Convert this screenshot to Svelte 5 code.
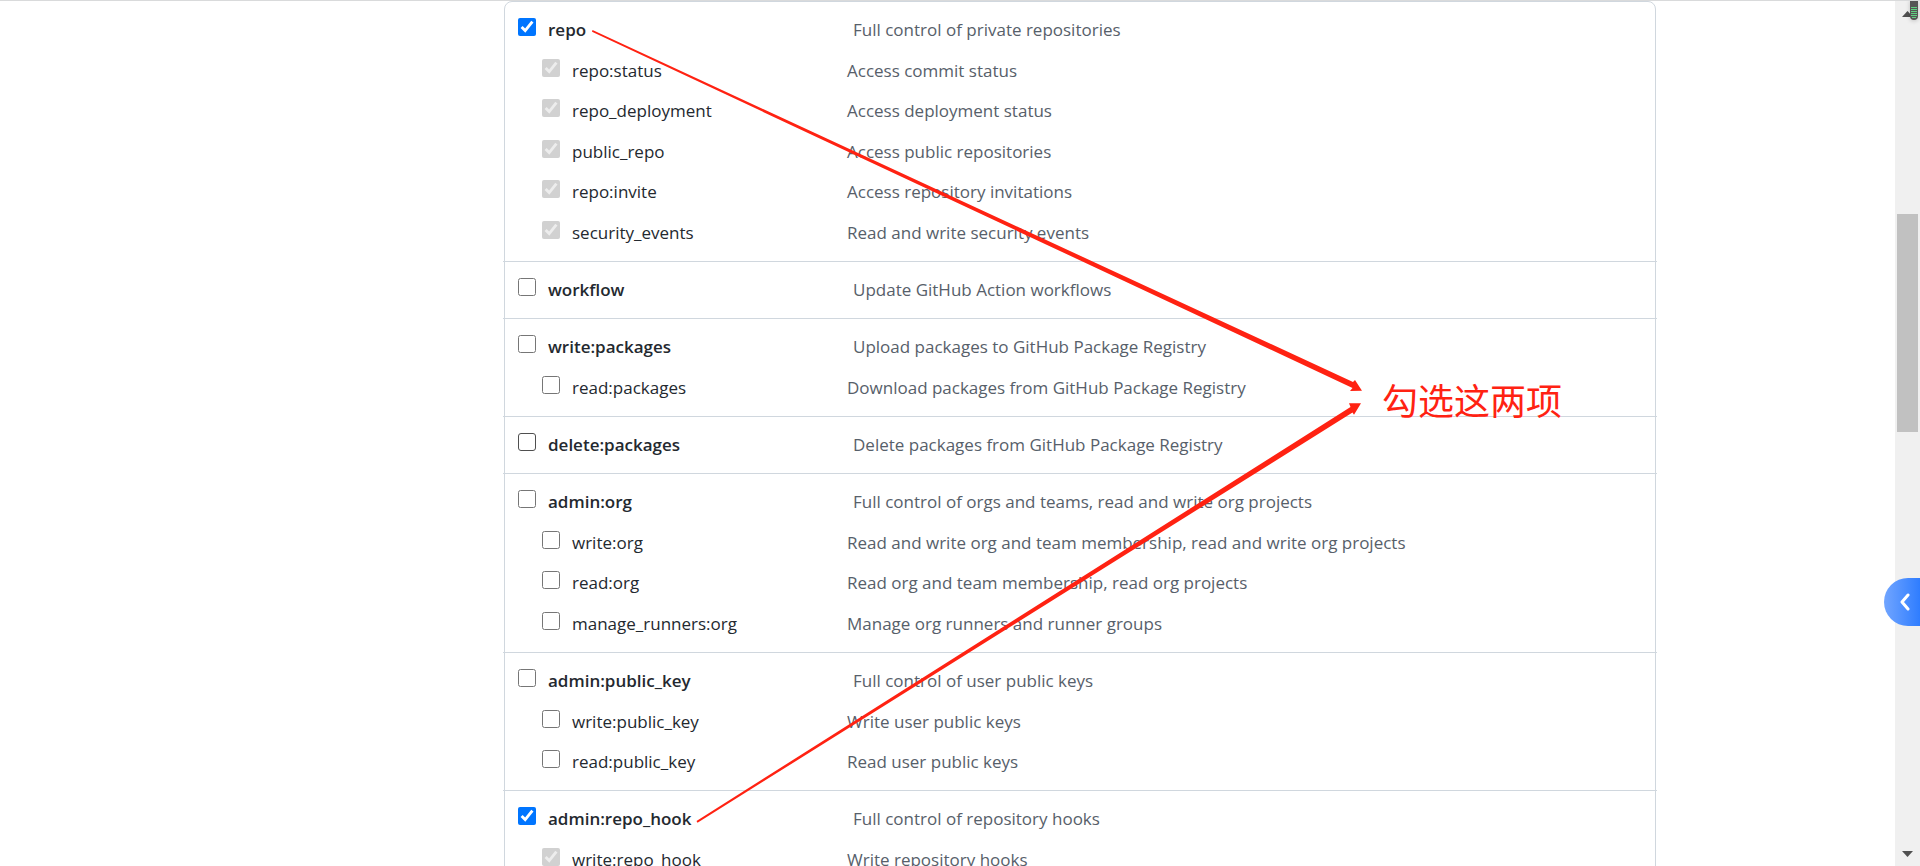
<script>
  let groups = $state([
    {
      name: "repo", desc: "Full control of private repositories", checked: true,
      children: [
        { name: "repo:status", desc: "Access commit status" },
        { name: "repo_deployment", desc: "Access deployment status" },
        { name: "public_repo", desc: "Access public repositories" },
        { name: "repo:invite", desc: "Access repository invitations" },
        { name: "security_events", desc: "Read and write security events" }
      ]
    },
    { name: "workflow", desc: "Update GitHub Action workflows", checked: false, children: [] },
    {
      name: "write:packages", desc: "Upload packages to GitHub Package Registry", checked: false,
      children: [
        { name: "read:packages", desc: "Download packages from GitHub Package Registry" }
      ]
    },
    { name: "delete:packages", desc: "Delete packages from GitHub Package Registry", checked: false, active: true, children: [] },
    {
      name: "admin:org", desc: "Full control of orgs and teams, read and write org projects", checked: false,
      children: [
        { name: "write:org", desc: "Read and write org and team membership, read and write org projects" },
        { name: "read:org", desc: "Read org and team membership, read org projects" },
        { name: "manage_runners:org", desc: "Manage org runners and runner groups" }
      ]
    },
    {
      name: "admin:public_key", desc: "Full control of user public keys", checked: false,
      children: [
        { name: "write:public_key", desc: "Write user public keys" },
        { name: "read:public_key", desc: "Read user public keys" }
      ]
    },
    {
      name: "admin:repo_hook", desc: "Full control of repository hooks", checked: true,
      children: [
        { name: "write:repo_hook", desc: "Write repository hooks" }
      ]
    }
  ]);
</script>

<div class="window">
  <main class="content">
    <div class="container">
      <div class="scopes">
        {#each groups as group}
          <section class="group">
            <div class="row head">
              <input type="checkbox" id={group.name} class:active={group.active} bind:checked={group.checked} />
              <label for={group.name}>{group.name}</label>
              <span class="desc">{group.desc}</span>
            </div>
            {#if group.children.length}
              <ul>
                {#each group.children as scope}
                  <li class="row">
                    <!-- child scopes follow their parent -->
                    <input type="checkbox" id={scope.name} checked={group.checked} disabled={group.checked} />
                    <label for={scope.name}>{scope.name}</label>
                    <span class="desc">{scope.desc}</span>
                  </li>
                {/each}
              </ul>
            {/if}
          </section>
        {/each}

        <svg class="arrows" width="900" height="864" aria-hidden="true">
          <polygon points="87.500,28 848,380 850,378 857,388.7 845,389 847.500,386 87,29.800" />
          <polygon points="191.500,819 845.500,405 844,401.2 856,401.2 849,412.7 847.500,410.5 192.500,820.700" />
        </svg>
        <p class="note">勾选这两项</p>
      </div>
    </div>
  </main>

  <div class="scrollbar" aria-hidden="true">
    <svg width="11" height="6"><path d="M5.500 0 11 6H0z" /></svg>
    <div class="thumb"></div>
    <svg class="down" width="11" height="6"><path d="M0 0h11L5.500 6z" /></svg>
  </div>

  <svg class="gauge" width="10" height="20" aria-hidden="true">
    <path d="M1 0h8v16a4 4 0 0 1-8 0z" fill="#555" />
    <path d="M2 7.500h6M2 9.500h6M2 11.500h6M2 13.500h6M2 15.500h6M3 17.500h4" stroke="#5fd080" />
  </svg>

  <button class="drawer" aria-label="Open side panel">
    <svg width="10" height="18" viewBox="0 0 10 18">
      <path d="M8 2 2 9l6 7" fill="none" stroke="#fff" stroke-width="3" stroke-linecap="round" stroke-linejoin="round" />
    </svg>
  </button>
</div>

<style>
  :global(body) {
    margin: 0;
    background: #fff;
    font-family: "Segoe UI", "Open Sans", "Noto Sans", sans-serif;
    font-size: 17px;
    line-height: 24px;
    color: #24292f;
  }

  .window {
    position: relative;
    display: flex;
    height: 100vh;
    box-sizing: border-box;
    overflow: hidden;
    border-top: 1px solid #d9dadb;
  }

  .content {
    flex: 1;
    min-width: 0;
  }

  .container {
    box-sizing: border-box;
    max-width: 1417px;
    margin: 0 auto;
    padding-left: 265px;
  }

  .scopes {
    position: relative;
    border: 1px solid #d0d7de;
    border-radius: 8px;
  }

  .group {
    margin: 0 -2px;
    padding: 16px 0 0 15px;
  }

  .group + .group {
    border-top: 1px solid #d0d7de;
  }

  .row {
    display: grid;
    grid-template-columns: 18px 263px 1fr;
    column-gap: 12px;
    align-items: start;
    height: 40px;
  }

  .head {
    grid-template-columns: 18px 293px 1fr;
  }

  .head label {
    font-weight: 600;
  }

  ul {
    list-style: none;
    margin: 0;
    padding: 0 0 0 24px;
  }

  li:nth-child(odd) {
    padding-top: 1px;
  }

  input {
    width: 18px;
    height: 18px;
    margin: 0;
  }

  input.active:not(:checked) {
    appearance: none;
    border: 1px solid #4f4f4f;
    border-radius: 3px;
  }

  .desc {
    color: #57606a;
  }

  .arrows {
    position: absolute;
    top: 0;
    left: 0;
    fill: #ff2212;
    pointer-events: none;
  }

  .note {
    position: absolute;
    top: 373px;
    left: 877px;
    margin: 0;
    font-family: "Noto Sans CJK SC", sans-serif;
    font-size: 36px;
    line-height: 48px;
    font-weight: 400;
    color: #ff2212;
  }

  .scrollbar {
    display: flex;
    flex-direction: column;
    align-items: center;
    width: 25px;
    box-sizing: border-box;
    padding: 10px 0 9px;
    background: #f0f0f0;
  }

  .scrollbar svg {
    fill: #505050;
  }

  .thumb {
    width: 21px;
    height: 218px;
    margin-top: 197px;
    background: #c1c1c1;
  }

  .down {
    margin-top: auto;
  }

  .gauge {
    position: absolute;
    top: -1px;
    right: 1px;
    filter: drop-shadow(0 1px 2px rgba(0, 0, 0, 0.2));
  }

  .drawer {
    position: absolute;
    top: 577px;
    right: 0;
    display: flex;
    align-items: center;
    width: 36px;
    height: 48px;
    padding: 0 0 0 16px;
    border: none;
    border-radius: 24px 0 0 24px;
    background: linear-gradient(90deg, #71a5ff, #2f7dff);
    cursor: pointer;
  }
</style>
